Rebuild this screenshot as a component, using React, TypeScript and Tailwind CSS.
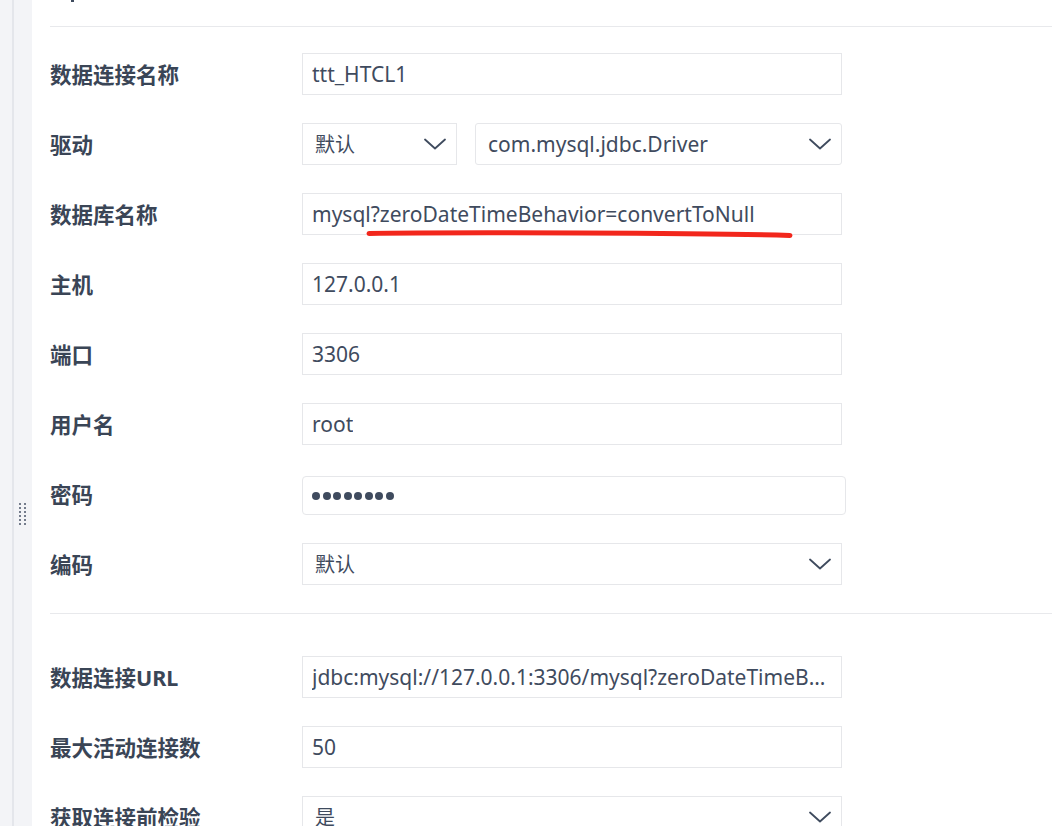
const font = "font-['Noto_Sans','Noto_Sans_CJK_SC',sans-serif]";

function Chevron() {
  return (
    <svg width="22" height="12" viewBox="0 0 22 12" fill="none" className="shrink-0">
      <path d="M1 1.5 L11 10.5 L21 1.5" stroke="#3f4b5e" strokeWidth="1.8" strokeLinecap="round" strokeLinejoin="round" />
    </svg>
  );
}

function Row({ label, children }: { label: string; children: React.ReactNode }) {
  return (
    <div className="flex h-[70px] items-center">
      <div className="w-[252px] shrink-0 pt-[2px] text-[21.5px] font-bold text-[#3a4556]">{label}</div>
      {children}
    </div>
  );
}

function TextBox({ value, className = "" }: { value: string; className?: string }) {
  return (
    <div className={`flex h-[42px] w-[540px] items-center border border-[#e6e7ea] bg-white pl-[9px] pr-[8px] pt-[2px] text-[21px] text-[#3f4b5e] ${className}`}>
      <span className="truncate">{value}</span>
    </div>
  );
}

function Select({ value, className = "" }: { value: string; className?: string }) {
  return (
    <div className={`flex h-[42px] items-center justify-between border border-[#e6e7ea] bg-white pl-[12px] pr-[10px] text-[20px] text-[#3f4b5e] ${className}`}>
      <span className="truncate pt-[2px]">{value}</span>
      <Chevron />
    </div>
  );
}

export default function App() {
  return (
    <div className={`flex h-[826px] w-[1052px] overflow-hidden bg-white ${font}`}>
      {/* left gutter with drag handle */}
      <div className="flex w-[32px] shrink-0 bg-[#f3f4f7]">
        <div className="w-[12px]" />
        <div className="w-[2px] bg-[#e4e6eb]" />
        <div className="flex-1 pt-[503px] pl-[5px]">
          <div className="grid w-[7px] grid-cols-2 gap-x-[3px] gap-y-[2px]">
            {Array.from({ length: 12 }).map((_, i) => (
              <span key={i} className="h-[2px] w-[2px] rounded-full bg-[#4a5568]" />
            ))}
          </div>
        </div>
      </div>

      <div className="flex-1 pl-[18px]">
        <div className="h-[26px]">
          <span className="ml-[21px] block h-[2px] w-[3px] bg-[#3f4b5e]" />
        </div>
        <div className="h-px bg-[#e8e9ec]" />

        <div className="mt-[12px]">
          <Row label="数据连接名称">
            <TextBox value="ttt_HTCL1" />
          </Row>
          <Row label="驱动">
            <div className="flex gap-[18px]">
              <Select value="默认" className="w-[155px]" />
              <Select value="com.mysql.jdbc.Driver" className="w-[367px] rounded-[3px] text-[21px]" />
            </div>
          </Row>
          <Row label="数据库名称">
            <div className="relative">
              <TextBox value="mysql?zeroDateTimeBehavior=convertToNull" />
              <svg className="pointer-events-none absolute left-[64px] top-[36px]" width="428" height="12" viewBox="0 0 428 12">
                <path d="M3 4.5 Q60 3.5 214 4 Q360 4.5 424 6.5" stroke="#f2271c" strokeWidth="5" strokeLinecap="round" fill="none" />
              </svg>
            </div>
          </Row>
          <Row label="主机">
            <TextBox value="127.0.0.1" />
          </Row>
          <Row label="端口">
            <TextBox value="3306" />
          </Row>
          <Row label="用户名">
            <TextBox value="root" />
          </Row>
          <Row label="密码">
            <div className="mt-[3px] flex h-[39px] w-[544px] items-center gap-[2.5px] rounded-[4px] border border-[#e6e7ea] pl-[9px]">
              {Array.from({ length: 8 }).map((_, i) => (
                <span key={i} className="h-[8px] w-[8px] rounded-full bg-[#3f4b5e]" />
              ))}
            </div>
          </Row>
          <Row label="编码">
            <Select value="默认" className="w-[540px]" />
          </Row>
        </div>

        <div className="mt-[14px] h-px bg-[#e8e9ec]" />

        <div className="mt-[28px]">
          <Row label="数据连接URL">
            <TextBox value="jdbc:mysql://127.0.0.1:3306/mysql?zeroDateTimeBehavior=convertToNull" />
          </Row>
          <Row label="最大活动连接数">
            <TextBox value="50" />
          </Row>
          <Row label="获取连接前检验">
            <Select value="是" className="w-[540px]" />
          </Row>
        </div>
      </div>
    </div>
  );
}
